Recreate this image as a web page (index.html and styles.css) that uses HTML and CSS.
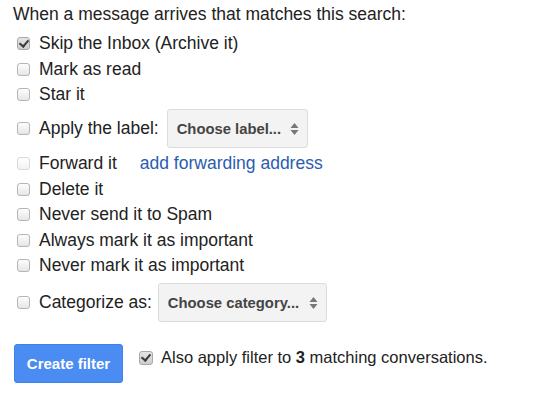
FILE: index.html
```html
<!DOCTYPE html>
<html>
<head>
<meta charset="utf-8">
<link rel="stylesheet" href="styles.css">
</head>
<body>
<div class="panel">
  <div class="header">When a message arrives that matches this search:</div>
  <div class="options">
    <label class="row"><span class="cb checked"></span>Skip the Inbox (Archive it)</label>
    <label class="row"><span class="cb"></span>Mark as read</label>
    <label class="row"><span class="cb"></span>Star it</label>
    <div class="row row-select row-label">
      <span class="cb"></span><span class="lbl">Apply the label:</span>
      <span class="select select-label">Choose label...<span class="arrows"><svg width="9" height="14" viewBox="0 0 9 14"><path d="M4.5 1 L8.5 6 H0.5 Z M4.5 13 L8.5 8 H0.5 Z" fill="#777"/></svg></span></span>
    </div>
    <div class="row"><span class="cb disabled"></span><span class="fwd">Forward it</span><a class="link" href="#">add forwarding address</a></div>
    <label class="row"><span class="cb"></span>Delete it</label>
    <label class="row"><span class="cb"></span>Never send it to Spam</label>
    <label class="row"><span class="cb"></span>Always mark it as important</label>
    <label class="row"><span class="cb"></span>Never mark it as important</label>
    <div class="row row-select row-cat">
      <span class="cb"></span><span class="lbl lbl-cat">Categorize as:</span>
      <span class="select select-cat">Choose category...<span class="arrows"><svg width="9" height="14" viewBox="0 0 9 14"><path d="M4.5 1 L8.5 6 H0.5 Z M4.5 13 L8.5 8 H0.5 Z" fill="#777"/></svg></span></span>
    </div>
  </div>
  <div class="actions">
    <button class="btn">Create filter</button>
    <label class="also"><span class="cb checked"></span>Also apply filter to&nbsp;<b>3</b>&nbsp;matching conversations.</label>
  </div>
</div>
</body>
</html>
```
FILE: styles.css
```css
html, body {
  margin: 0;
  padding: 0;
  background: #fff;
}
body {
  font-family: "Liberation Sans", Arial, sans-serif;
  font-size: 17.5px;
  color: #222;
}
.panel {
  padding: 4px 0 0 13px;
}
.header {
  line-height: 20px;
  margin-bottom: 7px;
}
.options {
  display: flex;
  flex-direction: column;
}
.row {
  display: flex;
  align-items: center;
  height: 25.5px;
  white-space: nowrap;
}
.cb {
  box-sizing: border-box;
  width: 13px;
  height: 13px;
  margin-left: 4px;
  margin-right: 9px;
  border: 1px solid #b5b5b5;
  border-radius: 3px;
  background: linear-gradient(#fdfdfd, #e6e6e6);
  position: relative;
  flex: none;
}
.cb.disabled {
  border-color: #d8d8d8;
  background: linear-gradient(#fff, #f2f2f2);
}
.cb.checked {
  background: linear-gradient(#e4e4e4, #cfcfcf);
  border-color: #a8a8a8;
}
.cb.checked::after {
  content: "";
  position: absolute;
  left: 3px;
  top: 0px;
  width: 4px;
  height: 7px;
  border-right: 2px solid #3a3a3a;
  border-bottom: 2px solid #3a3a3a;
  transform: rotate(40deg);
}
.row-select {
  height: 39px;
}
.row-label {
  margin: 1.5px 0 3px;
}
.row-cat {
  margin: 4.5px 0 0;
}
.lbl {
  margin-right: 8px;
}
.lbl-cat {
  margin-right: 6px;
}
.select {
  display: flex;
  align-items: center;
  box-sizing: border-box;
  height: 39px;
  padding: 0 8px 0 9px;
  background: #f3f3f3;
  border: 1px solid #dcdcdc;
  border-radius: 3px;
  font-size: 14.8px;
  font-weight: bold;
  color: #444;
}
.select-label {
  width: 141px;
}
.select-cat {
  width: 169px;
}
.arrows {
  display: flex;
  margin-left: auto;
}
.fwd {
  margin-right: 23px;
}
.link {
  color: #2a5db0;
  text-decoration: none;
}
.actions {
  display: flex;
  align-items: flex-start;
  margin-top: 22px;
}
.btn {
  box-sizing: border-box;
  width: 109px;
  height: 39px;
  margin-left: 1px;
  border: 1px solid #3b82ee;
  border-radius: 3px;
  background: #4a8cf1;
  color: #fff;
  font-family: "Liberation Sans", Arial, sans-serif;
  font-size: 15px;
  font-weight: bold;
  padding: 0;
}
.also {
  display: flex;
  align-items: center;
  height: 25px;
  margin-left: 12px;
  margin-top: 1px;
  font-size: 16.5px;
  white-space: nowrap;
}
.also .cb {
  width: 14px;
  height: 14px;
  margin-left: 4px;
  margin-right: 8px;
}
```
